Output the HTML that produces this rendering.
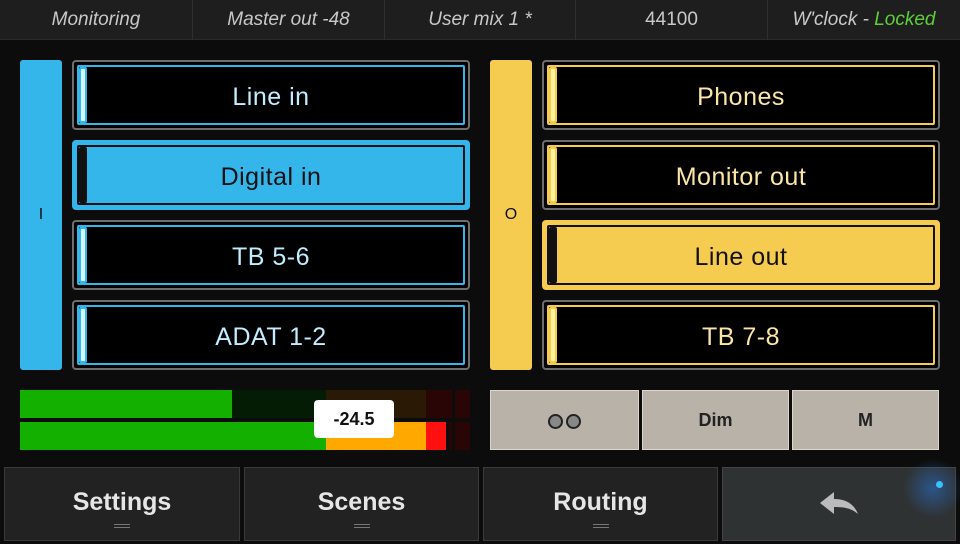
<!DOCTYPE html><html><head><style>
*{box-sizing:border-box;margin:0;padding:0}
body{width:960px;height:544px;background:#0c0c0c;position:relative;overflow:hidden;font-family:"Liberation Sans",sans-serif}
.a{position:absolute}
.top{left:0;top:0;width:960px;height:40px;background:#1e1e1e;border-bottom:1px solid #2a2a2a}
.tc{position:absolute;top:0;height:40px;line-height:40px;text-align:center;color:#c8c8c8;font-style:italic;font-size:19px;border-right:1px solid #2e2e2e}
.side{width:42px;height:310px;top:60px;border-radius:3px;text-align:center;line-height:310px;font-size:16px;color:#111}
.btn{width:398px;height:70px;border:2px solid #6e6e6e;border-radius:4px;background:#000}
.in{position:absolute;left:3px;top:3px;right:3px;bottom:3px;border:2px solid;border-radius:2px;text-align:center;line-height:61px;font-size:25px;letter-spacing:.5px}
.ind{position:absolute;left:0;top:0;width:8px;bottom:0;border-radius:2px}
.bl .in{border-color:#35b6ea;color:#bfeeff}
.bl .ind{background:#d8f4ff;border:2px solid #35b6ea}
.ye .in{border-color:#f5cc50;color:#fbe6a6}
.ye .ind{background:#fff3a0;border:2px solid #f5cc50}
.sb{border-color:#35b6ea;background:#35b6ea}
.sb .in{background:#35b6ea;border-color:#111;color:#111}
.sb .ind{background:#111;border:none}
.sy{border-color:#f5cc50;background:#f5cc50}
.sy .in{background:#f5cc50;border-color:#111;color:#111}
.sy .ind{background:#111;border:none}
.gb{top:390px;height:60px;background:#b9b2a8;border:1px solid #ddd6cc;text-align:center;line-height:58px;font-weight:bold;font-size:18px;color:#222}
.nav{top:467px;height:74px;background:#222;border:1px solid #3a3a3a;text-align:center;color:#e6e6e6;font-weight:bold;font-size:25px;line-height:68px}
.nav i{position:absolute;left:50%;margin-left:-8px;top:56px;width:16px;height:4px;border-top:1px solid #777;border-bottom:1px solid #777}
</style></head><body>
<div class="a top">
<div class="tc" style="left:0;width:193px">Monitoring</div>
<div class="tc" style="left:193px;width:192px">Master out -48</div>
<div class="tc" style="left:385px;width:191px">User mix 1 *</div>
<div class="tc" style="left:576px;width:192px;font-style:normal">44100</div>
<div class="tc" style="left:768px;width:192px;border:none">W'clock - <span style="color:#5ccf3a">Locked</span></div>
</div>
<div class="a side" style="left:20px;background:#35b6ea">I</div>
<div class="a btn bl" style="left:72px;top:60px"><div class="in"><div class="ind"></div>Line in</div></div>
<div class="a btn sb" style="left:72px;top:140px"><div class="in"><div class="ind"></div>Digital in</div></div>
<div class="a btn bl" style="left:72px;top:220px"><div class="in"><div class="ind"></div>TB 5-6</div></div>
<div class="a btn bl" style="left:72px;top:300px"><div class="in"><div class="ind"></div>ADAT 1-2</div></div>
<div class="a side" style="left:490px;background:#f5cc50">O</div>
<div class="a btn ye" style="left:542px;top:60px"><div class="in"><div class="ind"></div>Phones</div></div>
<div class="a btn ye" style="left:542px;top:140px"><div class="in"><div class="ind"></div>Monitor out</div></div>
<div class="a btn sy" style="left:542px;top:220px"><div class="in"><div class="ind"></div>Line out</div></div>
<div class="a btn ye" style="left:542px;top:300px"><div class="in"><div class="ind"></div>TB 7-8</div></div>
<div class="a" style="left:20px;top:390px;width:212px;height:28px;background:#13b000"></div>
<div class="a" style="left:232px;top:390px;width:94px;height:28px;background:#031c03"></div>
<div class="a" style="left:326px;top:390px;width:100px;height:28px;background:#2a1a05"></div>
<div class="a" style="left:426px;top:390px;width:26px;height:28px;background:#2a0505"></div>
<div class="a" style="left:455px;top:390px;width:15px;height:28px;background:#2a0505"></div>
<div class="a" style="left:20px;top:422px;width:306px;height:28px;background:#13b000"></div>
<div class="a" style="left:326px;top:422px;width:100px;height:28px;background:#ffa800"></div>
<div class="a" style="left:426px;top:422px;width:20px;height:28px;background:#ff1010"></div>
<div class="a" style="left:449px;top:422px;width:3px;height:28px;background:#2a0505"></div>
<div class="a" style="left:455px;top:422px;width:15px;height:28px;background:#2a0505"></div>
<div class="a" style="left:314px;top:400px;width:80px;height:38px;background:#fff;border-radius:4px;text-align:center;line-height:38px;font-size:18px;font-weight:bold;color:#111">-24.5</div>
<div class="a gb" style="left:490px;width:149px"><span style="display:inline-block;width:15px;height:15px;border:2px solid #222;border-radius:50%;background:#888;vertical-align:middle"></span> <span style="display:inline-block;width:15px;height:15px;border:2px solid #222;border-radius:50%;background:#888;vertical-align:middle;margin-left:-2px"></span></div>
<div class="a gb" style="left:642px;width:147px">Dim</div>
<div class="a gb" style="left:792px;width:147px">M</div>
<div class="a nav" style="left:4px;width:236px">Settings<i></i></div>
<div class="a nav" style="left:244px;width:235px">Scenes<i></i></div>
<div class="a nav" style="left:483px;width:235px">Routing<i></i></div>
<div class="a nav" style="left:722px;width:234px;background:#2f3233;border-color:#444">
<svg class="a" style="left:95px;top:22px" width="42" height="30" viewBox="0 0 42 30"><path d="M2 13 L16 2 L16 9 C28 9 36 14 40 24 C33 18 26 17 16 17 L16 24 Z" fill="#bbb"/></svg>
<div class="a" style="left:180px;top:-10px;width:60px;height:60px;border-radius:50%;background:radial-gradient(circle,rgba(40,120,220,.5),rgba(40,120,220,0) 70%)"></div>
<div class="a" style="left:213px;top:13px;width:7px;height:7px;border-radius:50%;background:#3cc0ff"></div>
</div>
</body></html>
